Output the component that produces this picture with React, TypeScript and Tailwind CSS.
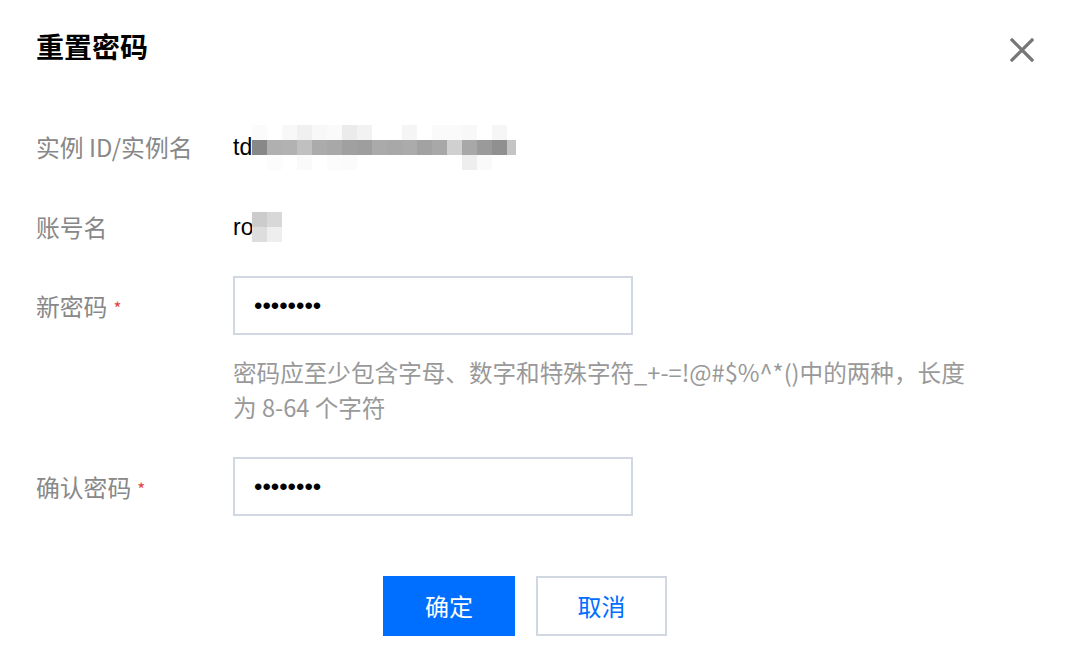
import React from "react";

const midRow = ["#888888","#b0b0b0","#b2b2b2","#c0c0c0","#ababab","#a8a8a8","#a0a0a0","#9e9e9e","#aaaaaa","#a8a8a8","#ababab","#a2a2a2","#a8a8a8","#d0d0d0","#a8a8a8","#9a9a9a","#909090","#c4c4c4"];
const topRow = ["#fbfbfb","#ffffff","#f8f8f8","#f0f0f0","#f8f8f8","#fafafa","#ebebeb","#f2f2f2","#ffffff","#ffffff","#f5f5f5","#ffffff","#fafafa","#fafafa","#f8f8f8","#ffffff","#f6f6f6","#ffffff"];
const botRow = ["#ffffff","#fcfcfc","#ffffff","#fafafa","#ffffff","#fcfcfc","#fbfbfb","#ffffff","#ffffff","#ffffff","#ffffff","#ffffff","#ffffff","#ffffff","#eeeeee","#fafafa","#ffffff","#ffffff"];

function Mosaic({ rows, widths }: { rows: string[][]; widths?: number[] }) {
  return (
    <div className="flex flex-col">
      {rows.map((r, i) => (
        <div key={i} className="flex">
          {r.map((c, j) => (
            <div key={j} style={{ background: c, width: widths ? widths[j] : 15, height: 15 }} />
          ))}
        </div>
      ))}
    </div>
  );
}

function Label({ children, required }: { children: React.ReactNode; required?: boolean }) {
  return (
    <div className="w-[197px] shrink-0 text-[23.8px] text-[#888888] flex items-center">
      <span>{children}</span>
      {required && <span className="ml-[6px] text-[17px] text-[#e54545] relative top-[2px]">*</span>}
    </div>
  );
}

export default function App() {
  const widths = Array.from({ length: 18 }, (_, i) => (i === 17 ? 9 : 15));
  return (
    <div
      className="w-[1070px] h-[654px] bg-white relative overflow-hidden"
      style={{ fontFamily: '"Noto Sans CJK SC", "Noto Sans", "Liberation Sans", sans-serif' }}
    >
      <div className="pl-[36px] pt-[28px]">
        <div className="text-[28px] leading-[36px] font-bold text-black">重置密码</div>

        <div className="flex items-center h-[40px] mt-[63px]">
          <Label>实例 ID/实例名</Label>
          <div className="flex items-center text-[23px] text-black" style={{ fontFamily: '"Liberation Sans", sans-serif' }}>
            <span className="w-[19px] whitespace-nowrap overflow-visible">td</span>
            <Mosaic rows={[topRow, midRow, botRow]} widths={widths} />
          </div>
        </div>

        <div className="flex items-center h-[40px] mt-[40px]">
          <Label>账号名</Label>
          <div className="flex items-center text-[23px] text-black" style={{ fontFamily: '"Liberation Sans", sans-serif' }}>
            <span className="w-[19px] whitespace-nowrap">ro</span>
            <Mosaic rows={[["#cccccc", "#d8d8d8"], ["#dddddd", "#eeeeee"]]} />
          </div>
        </div>

        <div className="flex items-center mt-[29px]">
          <Label required>新密码</Label>
          <div
            className="w-[400px] h-[59px] border-2 border-[#d1d8e2] flex items-center pl-[19px] text-[24px] text-black"
            style={{ fontFamily: '"Liberation Sans", sans-serif' }}
          >
            ••••••••
          </div>
        </div>

        <div className="pl-[197px] mt-[20px] w-[1000px] text-[23.6px] leading-[35px] text-[#999999]">
          密码应至少包含字母、数字和特殊字符_+-=!@#$%^*()中的两种，长度
          <br />
          为 8-64 个字符
        </div>

        <div className="flex items-center mt-[32px]">
          <Label required>确认密码</Label>
          <div
            className="w-[400px] h-[59px] border-2 border-[#d1d8e2] flex items-center pl-[19px] text-[24px] text-black"
            style={{ fontFamily: '"Liberation Sans", sans-serif' }}
          >
            ••••••••
          </div>
        </div>

        <div className="flex gap-[21px] mt-[60px] pl-[347px]">
          <button className="w-[132px] h-[60px] bg-[#006eff] text-white text-[24px]">确定</button>
          <button className="w-[131px] h-[60px] border-2 border-[#d1d8e2] bg-white text-[#006eff] text-[24px]">取消</button>
        </div>
      </div>

      <button className="absolute left-[1010px] top-[38px] w-[24px] h-[24px]">
        <svg viewBox="0 0 24 24" width="24" height="24">
          <path d="M2 2L22 22M22 2L2 22" stroke="#777777" strokeWidth="3.2" strokeLinecap="square" />
        </svg>
      </button>
    </div>
  );
}
